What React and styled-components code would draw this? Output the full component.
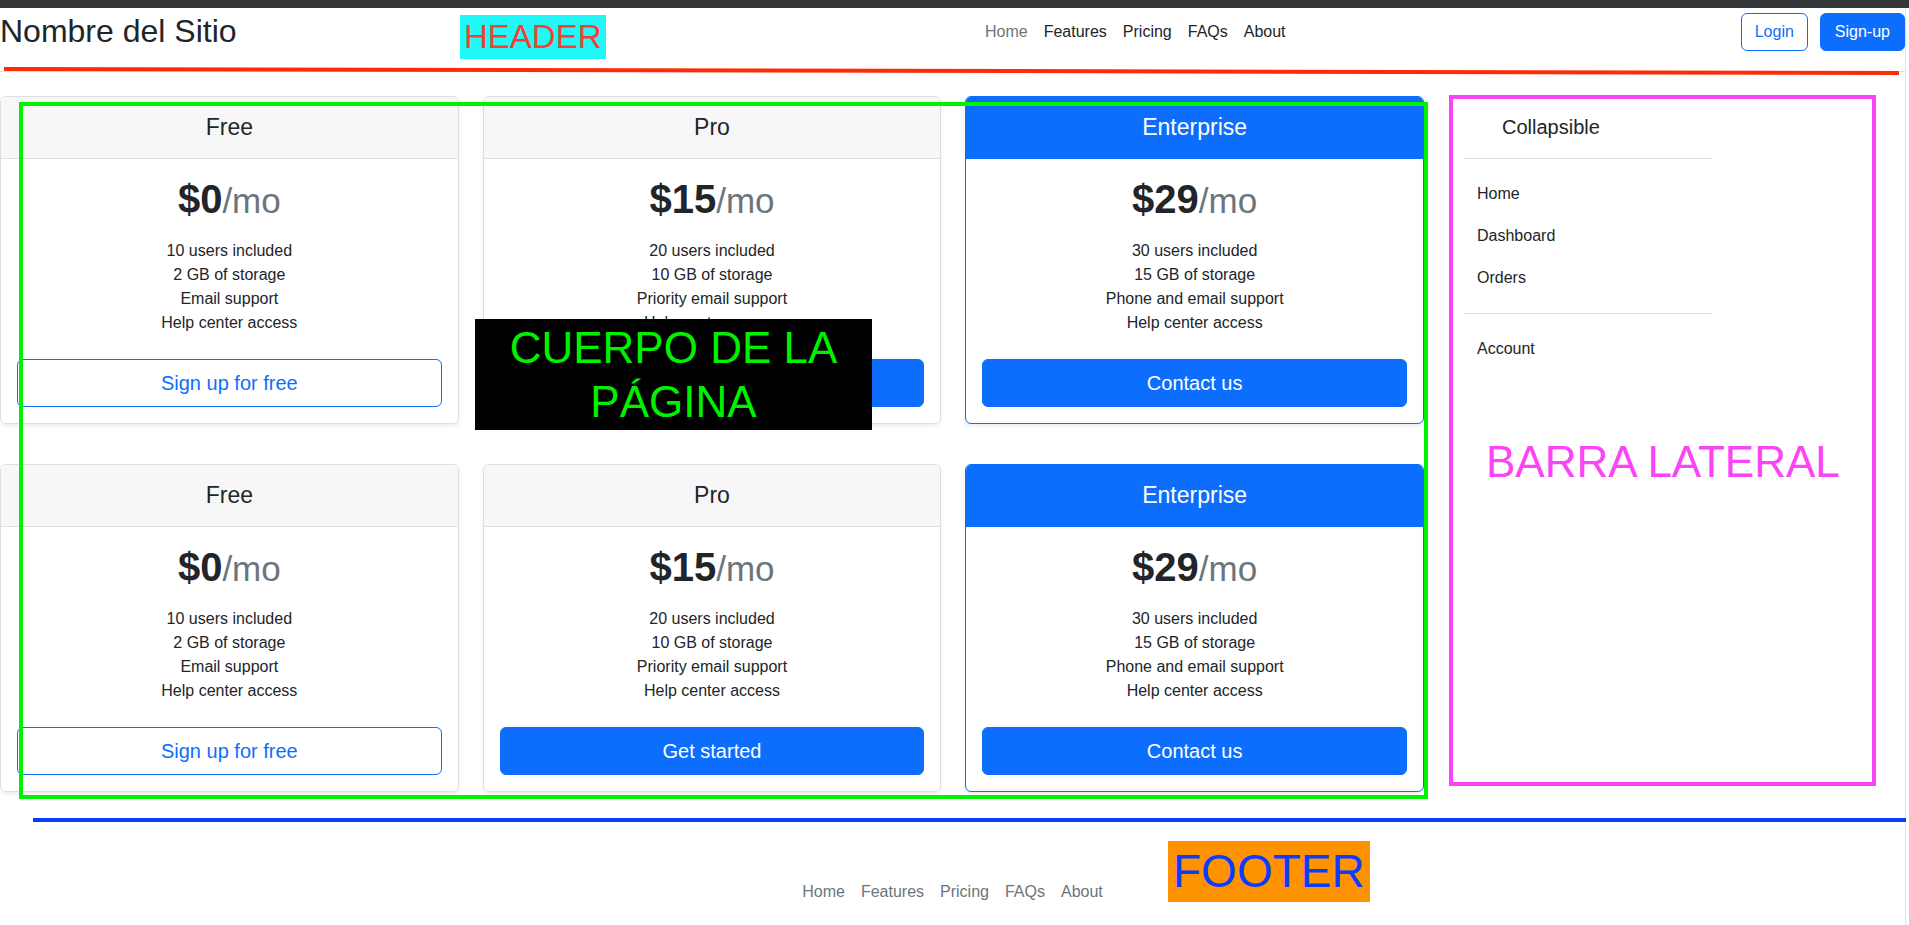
import React from "react";
import styled, { createGlobalStyle } from "styled-components";

const GlobalStyle = createGlobalStyle`
  * { box-sizing: border-box; }
  html, body { margin: 0; padding: 0; background: #fff; }
  body {
    font-family: "Liberation Sans", Arial, sans-serif;
    font-size: 16px;
    line-height: 1.5;
    color: #212529;
  }
  ul { margin: 0; padding: 0; list-style: none; }
`;

const TopBar = styled.div`
  height: 8px;
  background: #35363a;
`;

const Page = styled.div`
  margin-right: 3px;
  min-height: 917px;
  border-right: 1px solid #e4e4e6;
`;

/* ---------- header ---------- */

const Header = styled.header`
  position: relative;
  display: flex;
  align-items: flex-start;
  height: 64px;
  padding-top: 4px;
  border-bottom: 1px solid #dee2e6;
`;

const Brand = styled.div`
  flex: 0 0 977px;
  margin-top: 0;
  font-size: 32px;
  line-height: 1.2;
  color: #212529;
`;

const Nav = styled.ul`
  display: flex;
`;

const NavLink = styled.a`
  display: block;
  padding: 8px;
  line-height: 24px;
  font-size: 16px;
  text-decoration: none;
  color: ${(p) => (p.$muted ? "#6c757d" : "#212529")};
`;

const Actions = styled.div`
  display: flex;
  gap: 12px;
  margin-left: auto;
  margin-top: 1px;
`;

const SmallButton = styled.button`
  font-family: inherit;
  font-size: 16px;
  line-height: 24px;
  padding: 6px ${(p) => (p.$solid ? "14px" : "13px")};
  border-radius: 6px;
  border: 1px solid #0d6efd;
  background: ${(p) => (p.$solid ? "#0d6efd" : "#fff")};
  color: ${(p) => (p.$solid ? "#fff" : "#0d6efd")};
`;

/* ---------- annotations drawn over the page ---------- */

const Tag = styled.div`
  position: absolute;
  left: ${(p) => p.$left}px;
  top: ${(p) => p.$top}px;
  font-family: "Liberation Sans", Arial, sans-serif;
  white-space: nowrap;
`;

const HeaderTag = styled(Tag)`
  height: 44px;
  padding: 0 4px;
  font-size: 33px;
  line-height: 44px;
  background: #22f7f7;
  color: #ff3b2f;
`;

const RedStroke = styled.div`
  position: absolute;
  left: 4px;
  top: 59px;
  width: 1895px;
  height: 4px;
  background: #ff2a06;
  transform-origin: left center;
  transform: rotate(0.12deg);
`;

const Frame = styled.div`
  position: absolute;
  left: ${(p) => p.$left}px;
  top: ${(p) => p.$top}px;
  width: ${(p) => p.$w}px;
  height: ${(p) => p.$h}px;
  border: 4px solid ${(p) => p.$color};
  pointer-events: none;
`;

const BodyTag = styled(Tag)`
  width: 397px;
  height: 111px;
  padding-top: 2px;
  background: #000;
  color: #00f200;
  font-size: 44px;
  line-height: 54px;
  text-align: center;
  white-space: normal;
`;

const SideTag = styled(Tag)`
  font-size: 44px;
  line-height: 44px;
  color: #fb44f7;
`;

const BlueStroke = styled.div`
  position: absolute;
  left: 33px;
  right: -1px;
  top: 26px;
  height: 4px;
  background: #0a3cff;
`;

const FooterTag = styled(Tag)`
  height: 61px;
  padding: 0 5px;
  font-size: 46px;
  line-height: 61px;
  background: #ff9200;
  color: #0a3cff;
`;

/* ---------- main ---------- */

const Main = styled.main`
  display: flex;
  align-items: flex-start;
  gap: 24px;
  margin-top: 24px;
`;

const CardsArea = styled.section`
  position: relative;
  flex: 0 0 1424px;
`;

const CardGrid = styled.div`
  display: grid;
  grid-template-columns: repeat(3, 1fr);
  column-gap: 24px;
  row-gap: 40px;
`;

const Card = styled.div`
  display: flex;
  flex-direction: column;
  text-align: center;
  border: 1px solid ${(p) => (p.$featured ? "#0d6efd" : "#dfdfdf")};
  border-radius: 6px;
  box-shadow: 0 2px 4px rgba(0, 0, 0, 0.075);
  overflow: hidden;
`;

const CardHeader = styled.div`
  padding: 16px;
  background: ${(p) => (p.$featured ? "#0d6efd" : "#f7f7f7")};
  border-bottom: 1px solid ${(p) => (p.$featured ? "#0d6efd" : "#dfdfdf")};
  color: ${(p) => (p.$featured ? "#fff" : "#212529")};
  font-size: 23px;
  line-height: 28.8px;
`;

const CardBody = styled.div`
  padding: 16px;
`;

const Price = styled.div`
  height: 48px;
  font-size: 40px;
  line-height: 48px;
  font-weight: 700;
  color: #212529;
`;

const Per = styled.small`
  font-size: 35px;
  line-height: 1;
  font-weight: 400;
  color: #6c757d;
`;

const Features = styled.ul`
  margin: 16px 0 24px;
  line-height: 24px;
`;

const BigButton = styled.button`
  display: block;
  width: 100%;
  font-family: inherit;
  font-size: 20px;
  line-height: 30px;
  padding: 8px 16px;
  border-radius: 6px;
  border: 1px solid #0d6efd;
  background: ${(p) => (p.$solid ? "#0d6efd" : "#fff")};
  color: ${(p) => (p.$solid ? "#fff" : "#0d6efd")};
`;

/* ---------- sidebar ---------- */

const SideArea = styled.aside`
  position: relative;
  flex: 0 0 430px;
`;

const Sidebar = styled.div`
  width: 280px;
  padding: 16px;
`;

const SideBrand = styled.div`
  display: flex;
  align-items: center;
  padding-bottom: 16px;
  margin-bottom: 14px;
  border-bottom: 1px solid #dee2e6;
  font-size: 20px;
  line-height: 30px;
`;

const BrandIcon = styled.span`
  width: 30px;
  height: 24px;
  margin-right: 8px;
`;

const SideItem = styled.li`
  height: 42px;
  padding-left: 13px;
  line-height: 42px;
  font-size: 16px;
  color: #212529;
`;

const SideRule = styled.hr`
  margin: 14px 0;
  border: 0;
  border-top: 1px solid #dee2e6;
`;

/* ---------- footer ---------- */

const Footer = styled.footer`
  position: relative;
  padding-top: 80px;
`;

const FooterNav = styled.ul`
  display: flex;
  justify-content: center;
`;

const plans = [
  {
    name: "Free",
    price: "$0",
    items: ["10 users included", "2 GB of storage", "Email support", "Help center access"],
    action: "Sign up for free",
  },
  {
    name: "Pro",
    price: "$15",
    items: ["20 users included", "10 GB of storage", "Priority email support", "Help center access"],
    action: "Get started",
    solid: true,
  },
  {
    name: "Enterprise",
    price: "$29",
    items: ["30 users included", "15 GB of storage", "Phone and email support", "Help center access"],
    action: "Contact us",
    solid: true,
    featured: true,
  },
];

const links = ["Home", "Features", "Pricing", "FAQs", "About"];

const PlanCard = ({ plan }) => (
  <Card $featured={plan.featured}>
    <CardHeader $featured={plan.featured}>{plan.name}</CardHeader>
    <CardBody>
      <Price>
        {plan.price}
        <Per>/mo</Per>
      </Price>
      <Features>
        {plan.items.map((item) => (
          <li key={item}>{item}</li>
        ))}
      </Features>
      <BigButton $solid={plan.solid}>{plan.action}</BigButton>
    </CardBody>
  </Card>
);

const App = () => {
  return (
    <>
      <GlobalStyle />
      <TopBar />
      <Page>
        <Header>
          <Brand>Nombre del Sitio</Brand>
          <Nav>
            {links.map((l, i) => (
              <li key={l}>
                <NavLink href="#" $muted={i === 0}>{l}</NavLink>
              </li>
            ))}
          </Nav>
          <Actions>
            <SmallButton>Login</SmallButton>
            <SmallButton $solid>Sign-up</SmallButton>
          </Actions>
          <HeaderTag $left={460} $top={7}>HEADER</HeaderTag>
          <RedStroke />
        </Header>

        <Main>
          <CardsArea>
            <CardGrid>
              {[0, 1].map((row) =>
                plans.map((plan) => <PlanCard key={row + plan.name} plan={plan} />)
              )}
            </CardGrid>
            <Frame $left={19} $top={6} $w={1409} $h={697} $color="#00f200" />
            <BodyTag $left={475} $top={223}>CUERPO DE LA PÁGINA</BodyTag>
          </CardsArea>

          <SideArea>
            <Sidebar>
              <SideBrand>
                <BrandIcon />
                Collapsible
              </SideBrand>
              <ul>
                <SideItem>Home</SideItem>
                <SideItem>Dashboard</SideItem>
                <SideItem>Orders</SideItem>
              </ul>
              <SideRule />
              <ul>
                <SideItem>Account</SideItem>
              </ul>
            </Sidebar>
            <Frame $left={1} $top={-1} $w={427} $h={691} $color="#fb44f7" />
            <SideTag $left={38} $top={344}>BARRA LATERAL</SideTag>
          </SideArea>
        </Main>

        <Footer>
          <BlueStroke />
          <FooterNav>
            {links.map((l) => (
              <li key={l}>
                <NavLink href="#" $muted>{l}</NavLink>
              </li>
            ))}
          </FooterNav>
          <FooterTag $left={1168} $top={49}>FOOTER</FooterTag>
        </Footer>
      </Page>
    </>
  );
};

export default App;
